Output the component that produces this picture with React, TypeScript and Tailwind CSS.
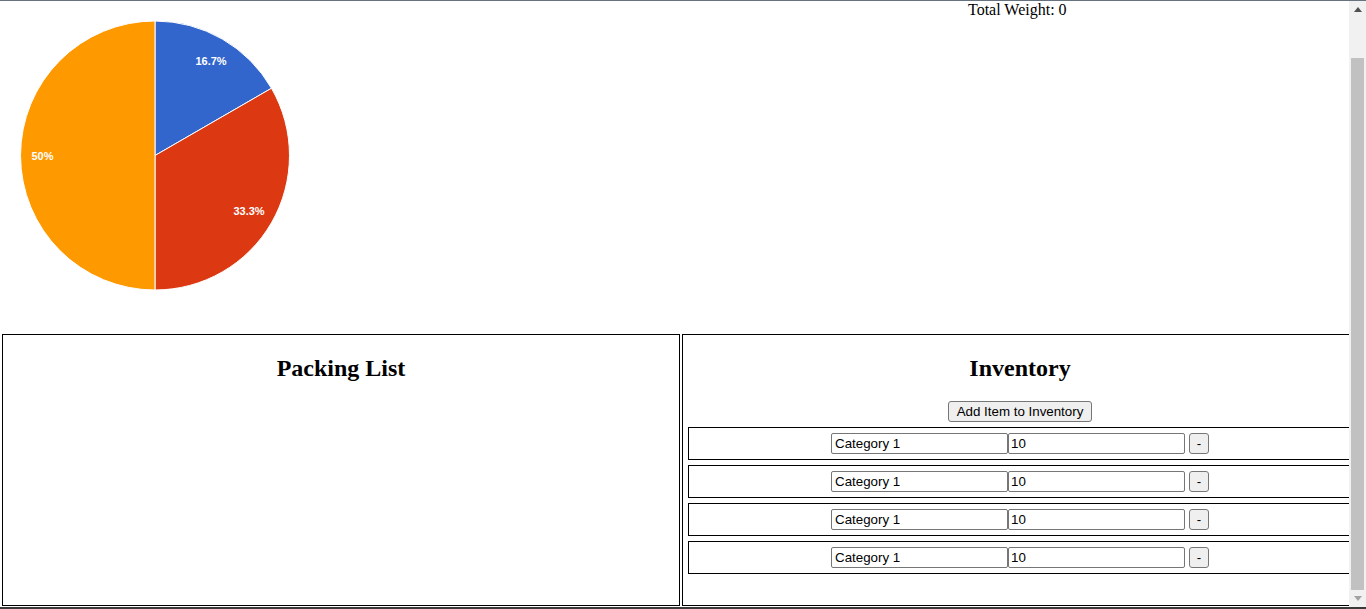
import React from "react";

function Pie() {
  const cx = 155;
  const cy = 154.5;
  const r = 134.5;
  const pt = (deg: number) => {
    const a = (deg * Math.PI) / 180;
    return [cx + r * Math.sin(a), cy - r * Math.cos(a)];
  };
  const slice = (a0: number, a1: number) => {
    const [x0, y0] = pt(a0);
    const [x1, y1] = pt(a1);
    const large = a1 - a0 > 180 ? 1 : 0;
    return `M${cx} ${cy} L${x0} ${y0} A${r} ${r} 0 ${large} 1 ${x1} ${y1} Z`;
  };
  return (
    <svg width="310" height="310" viewBox="0 0 310 310" className="block">
      <path d={slice(0, 60)} fill="#3366cc" stroke="#ffffff" strokeWidth="1" />
      <path d={slice(60, 180)} fill="#dc3912" stroke="#ffffff" strokeWidth="1" />
      <path d={slice(180, 360)} fill="#ff9900" stroke="#ffffff" strokeWidth="1" />
      <g
        fill="#ffffff"
        fontFamily="'Liberation Sans', Arial, sans-serif"
        fontSize="11"
        fontWeight="bold"
        textAnchor="middle"
      >
        <text x="211" y="63.5">16.7%</text>
        <text x="249" y="213.5">33.3%</text>
        <text x="42.5" y="159">50%</text>
      </g>
    </svg>
  );
}

const sans = { fontFamily: "'Liberation Sans', Arial, sans-serif" };

function Row() {
  return (
    <div className="flex h-[33px] items-center justify-center border border-black">
      <input
        defaultValue="Category 1"
        className="box-border h-[21px] w-[177px] rounded-[2px] border border-[#767676] bg-white px-[3px] text-[13.333px] text-black outline-none"
        style={sans}
      />
      <input
        defaultValue="10"
        className="box-border h-[21px] w-[177px] rounded-[2px] border border-[#767676] bg-white px-[2px] text-[13.333px] text-black outline-none"
        style={sans}
      />
      <button
        className="ml-[4px] box-border h-[21px] w-[20px] rounded-[3px] border border-[#767676] bg-[#efefef] text-[13.333px] leading-none text-black"
        style={sans}
      >
        -
      </button>
    </div>
  );
}

function Scrollbar() {
  return (
    <div className="flex w-[17px] shrink-0 flex-col bg-[#f1f1f1]">
      <div className="flex h-[17px] items-center justify-center">
        <svg width="8" height="5" viewBox="0 0 8 5">
          <path d="M0 5 L4 0 L8 5 Z" fill="#505050" />
        </svg>
      </div>
      <div className="mx-[2px] mt-[40px] h-[532px] bg-[#c1c1c1]" />
      <div className="flex-1" />
      <div className="flex h-[17px] items-center justify-center">
        <svg width="8" height="5" viewBox="0 0 8 5">
          <path d="M0 0 L8 0 L4 5 Z" fill="#a3a3a3" />
        </svg>
      </div>
    </div>
  );
}

export default function App() {
  return (
    <div
      className="box-border flex h-[609px] flex-col overflow-hidden border-t border-b-2 border-t-[#66727e] border-b-[#3a3a3a] bg-white text-black"
      style={{ fontFamily: "'Liberation Serif', 'Times New Roman', serif" }}
    >
      <div className="flex min-h-0 flex-1">
        <div className="min-w-0 flex-1 overflow-hidden">
          <div className="flex h-[331px]">
            <div className="w-[310px] shrink-0">
              <Pie />
            </div>
            <div className="ml-[658px] whitespace-nowrap text-[16px] leading-[18px]">Total Weight: 0</div>
          </div>
          <div className="flex gap-[2px] p-[2px]">
            <div className="box-border h-[272px] w-[678px] shrink-0 border border-black">
              <h2 className="mt-[19px] text-center text-[24px] font-bold leading-[28px]">Packing List</h2>
            </div>
            <div className="box-border h-[272px] w-[678px] shrink-0 border border-black pr-[2px]">
              <h2 className="mt-[19px] text-center text-[24px] font-bold leading-[28px]">Inventory</h2>
              <div className="mt-[19px] flex justify-center">
                <button
                  className="box-border h-[21px] w-[144px] rounded-[3px] border border-[#767676] bg-[#efefef] px-0 text-[13.333px] leading-none text-black"
                  style={sans}
                >
                  Add Item to Inventory
                </button>
              </div>
              <div className="mt-[5px] flex flex-col gap-[5px] px-[5px]">
                <Row />
                <Row />
                <Row />
                <Row />
              </div>
            </div>
          </div>
        </div>
        <Scrollbar />
      </div>
    </div>
  );
}
